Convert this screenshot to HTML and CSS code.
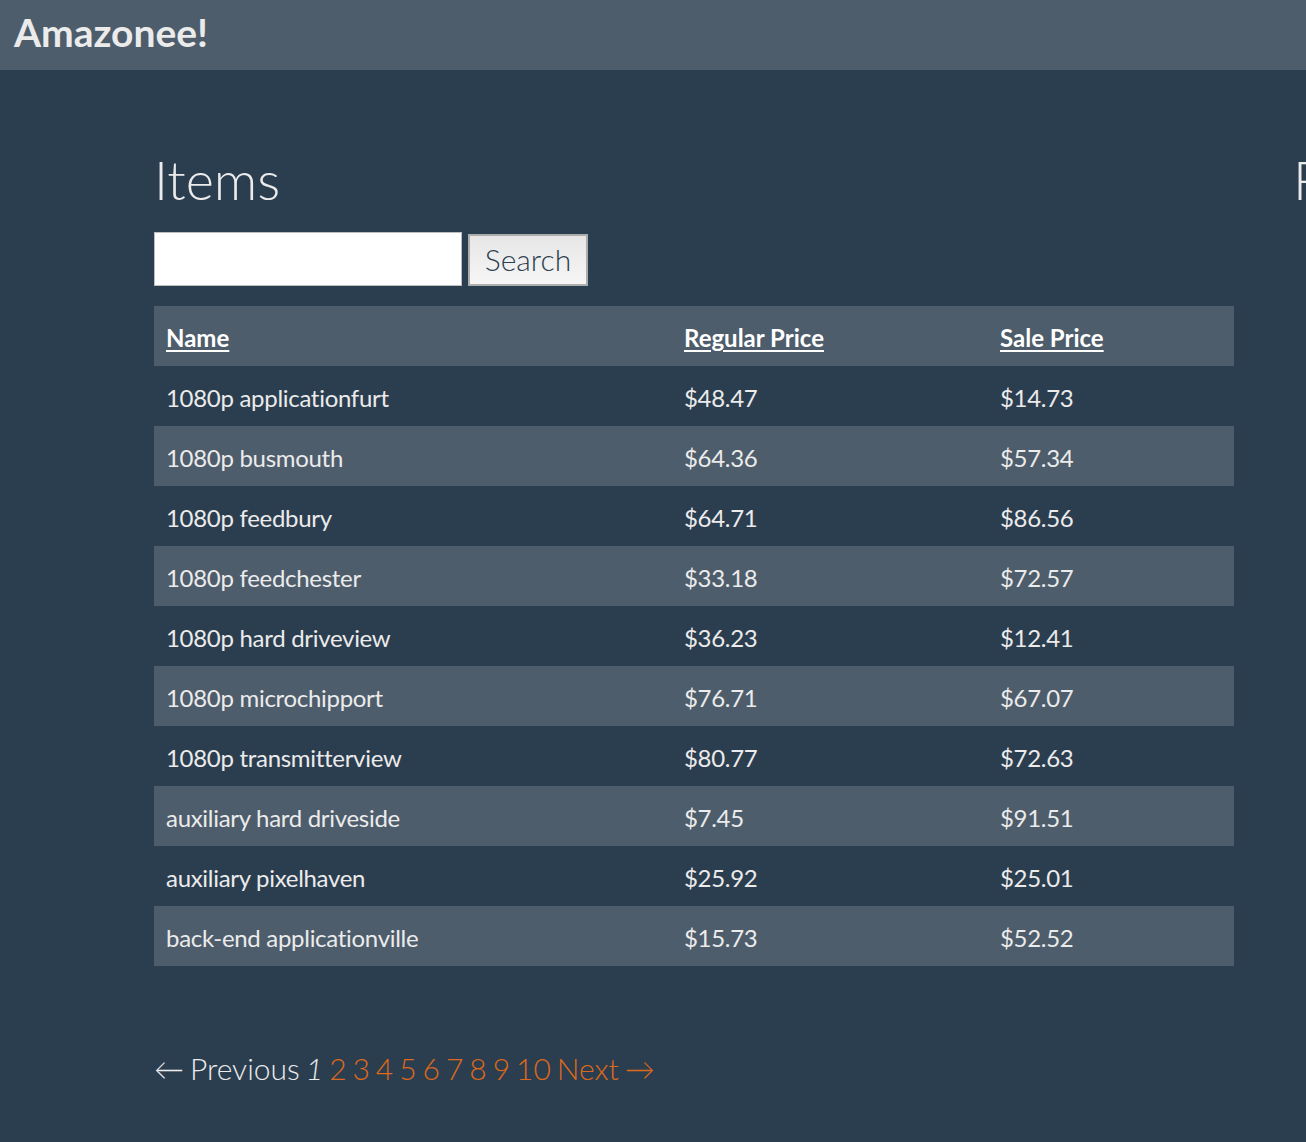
FILE: index.html
```html
<!DOCTYPE html>
<html>
<head>
<meta charset="utf-8">
<title>Amazonee!</title>
<link rel="stylesheet" href="styles.css">
</head>
<body>
<header class="navbar"><a class="brand" href="#">Amazonee!</a></header>
<div class="page">
  <main class="content">
    <h1 class="title">Items</h1>
    <form class="search">
      <input class="search-input" type="text">
      <button class="search-btn" type="button">Search</button>
    </form>
    <table class="items">
      <thead>
        <tr><th class="col-name"><a href="#">Name</a></th><th class="col-reg"><a href="#">Regular Price</a></th><th class="col-sale"><a href="#">Sale Price</a></th></tr>
      </thead>
      <tbody>
        <tr><td>1080p applicationfurt</td><td>$48.47</td><td>$14.73</td></tr>
        <tr><td>1080p busmouth</td><td>$64.36</td><td>$57.34</td></tr>
        <tr><td>1080p feedbury</td><td>$64.71</td><td>$86.56</td></tr>
        <tr><td>1080p feedchester</td><td>$33.18</td><td>$72.57</td></tr>
        <tr><td>1080p hard driveview</td><td>$36.23</td><td>$12.41</td></tr>
        <tr><td>1080p microchipport</td><td>$76.71</td><td>$67.07</td></tr>
        <tr><td>1080p transmitterview</td><td>$80.77</td><td>$72.63</td></tr>
        <tr><td>auxiliary hard driveside</td><td>$7.45</td><td>$91.51</td></tr>
        <tr><td>auxiliary pixelhaven</td><td>$25.92</td><td>$25.01</td></tr>
        <tr><td>back-end applicationville</td><td>$15.73</td><td>$52.52</td></tr>
      </tbody>
    </table>
    <nav class="pagination"><span class="prev disabled">&larr; Previous</span> <em class="current">1</em> <a href="#">2</a> <a href="#">3</a> <a href="#">4</a> <a href="#">5</a> <a href="#">6</a> <a href="#">7</a> <a href="#">8</a> <a href="#">9</a> <a href="#">10</a> <a class="next" href="#">Next &rarr;</a></nav>
  </main>
  <aside class="sidebar">
    <h1 class="title">Featured</h1>
  </aside>
</div>
</body>
</html>
```

FILE: styles.css
```css
html, body {
  margin: 0;
  padding: 0;
}
body {
  background: #2b3e50;
  color: #ebebeb;
  font-family: Lato, "Open Sans", "Liberation Sans", sans-serif;
  font-size: 24px;
  overflow: hidden;
  width: 1306px;
  height: 1142px;
}
a {
  color: #df691a;
  text-decoration: none;
}
.navbar {
  background: #4e5d6c;
  height: 70px;
  display: flex;
  align-items: center;
  padding-left: 14px;
}
.brand {
  color: #ebebeb;
  font-weight: 700;
  font-size: 39px;
  line-height: 1;
  margin-top: -6px;
}
.page {
  display: flex;
  gap: 59px;
  padding-left: 154px;
  padding-top: 80px;
  width: 2000px;
}
.content {
  width: 1080px;
  flex: none;
}
.sidebar {
  flex: none;
  width: 400px;
}
.title {
  font-weight: 300;
  font-size: 54px;
  line-height: 1.1;
  margin: 0 0 23px 0;
  color: #ebebeb;
}
.search {
  display: flex;
  align-items: flex-end;
  gap: 6px;
  margin: 0 0 20px 0;
}
.search-input {
  width: 308px;
  height: 54px;
  box-sizing: border-box;
  border: 1px solid #bdbdbd;
  background: #fff;
  margin: 0;
  padding: 0;
}
.search-btn {
  width: 120px;
  height: 52px;
  box-sizing: border-box;
  border: 2px solid #adadad;
  background: linear-gradient(#e6e6e6, #f6f6f6);
  color: #2b3e50;
  font-family: Lato, "Open Sans", sans-serif;
  font-size: 30px;
  font-weight: 300;
  margin: 0;
  padding: 0 0 2px 0;
}
.items {
  width: 1080px;
  border-collapse: collapse;
  border-spacing: 0;
}
.items th, .items td {
  height: 60px;
  padding: 2px 12px 0 12px;
  text-align: left;
  vertical-align: middle;
  box-sizing: border-box;
}
.items td {
  letter-spacing: -0.3px;
}
.items th {
  background: #4e5d6c;
  font-weight: 700;
}
.items th a {
  color: #fff;
  text-decoration: underline;
  text-underline-offset: 3px;
  text-decoration-thickness: 2px;
}
.col-name { width: 518px; }
.col-reg { width: 316px; }
.col-sale { width: 246px; }
.items tbody tr:nth-child(even) td {
  background: #4e5d6c;
}
.pagination {
  margin-top: 84px;
  font-size: 30px;
  font-weight: 300;
  word-spacing: -2.2px;
}
.pagination .disabled {
  color: #ebebeb;
}
.pagination .current {
  color: #ebebeb;
  font-style: italic;
}
```
